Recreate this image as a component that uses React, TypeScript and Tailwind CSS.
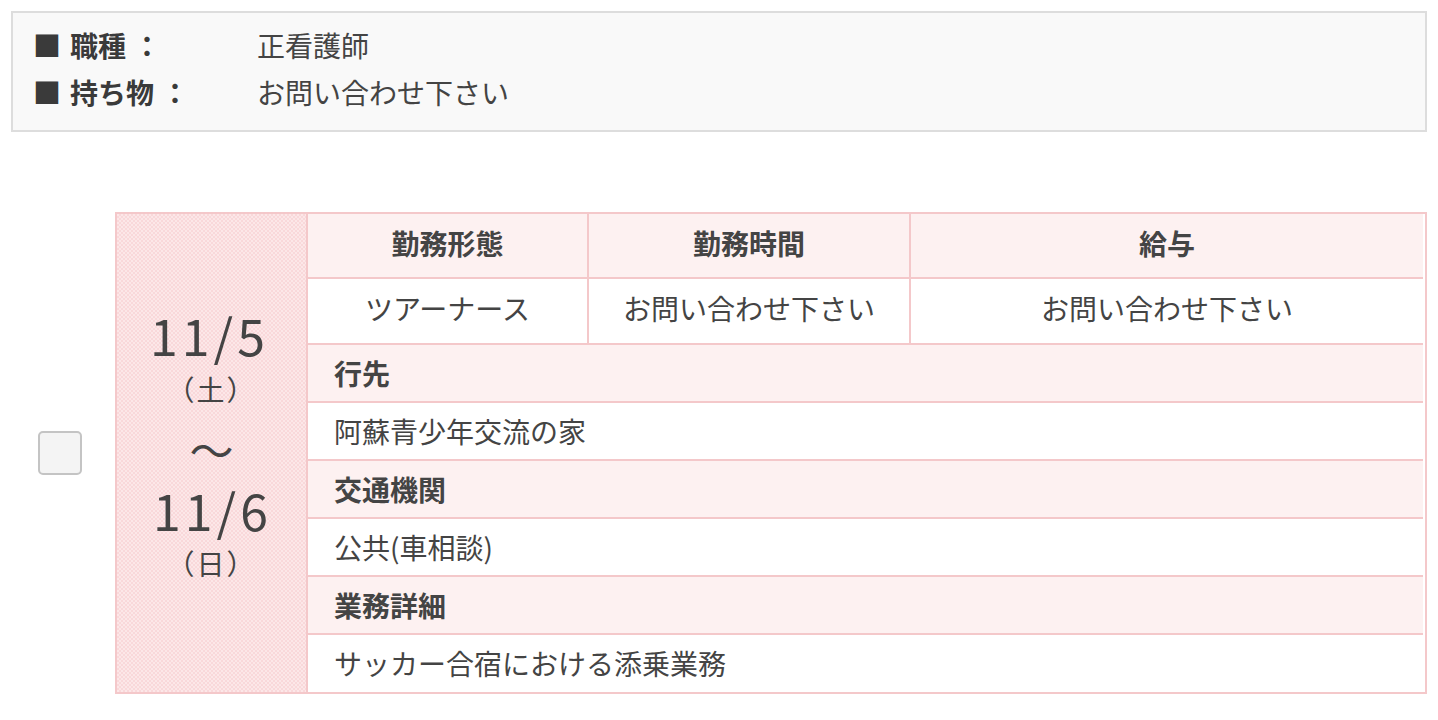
import React from 'react'

const rows = [
  { label: '行先', value: '阿蘇青少年交流の家' },
  { label: '交通機関', value: '公共(車相談)' },
  { label: '業務詳細', value: 'サッカー合宿における添乗業務' },
]

const info = [
  { label: '職種', value: '正看護師' },
  { label: '持ち物', value: 'お問い合わせ下さい' },
]

export default function App() {
  return (
    <div className="min-h-screen bg-white px-[11px] pt-[11px] text-[#444] font-['Noto_Sans_CJK_JP','Noto_Sans',sans-serif]">
      {/* 概要 */}
      <div className="border-2 border-[#dddddd] bg-[#f9f9f9] pl-[20px] pt-[9px] pb-[14px]">
        {info.map((item) => (
          <div key={item.label} className="flex text-[28px] leading-[47px]">
            <div className="w-[224px] shrink-0 font-bold text-[#3a3a3a]">
              <span>■</span>
              <span className="ml-[9px]">{item.label}</span>
              <span className="ml-[7px]">：</span>
            </div>
            <div>{item.value}</div>
          </div>
        ))}
      </div>

      {/* 日程 */}
      <div className="mt-[80px] flex">
        <div className="w-[104px] shrink-0 flex items-center pl-[27px]">
          <div className="w-[44px] h-[44px] rounded-[5px] border-2 border-[#c4c4c4] bg-[#f4f4f4]"></div>
        </div>

        <div className="flex-1 flex border-2 border-[#f4c8ca]">
          <div className="w-[191px] shrink-0 border-r-2 border-[#f4c8ca] bg-[repeating-conic-gradient(#f9d8da_0_25%,#fce7e8_0_50%)] bg-[length:4px_4px] flex flex-col items-center justify-center pb-[21px]">
            <div className="text-[50px] leading-[60px] tracking-[4px] pr-[4px]">11/5</div>
            <div className="mt-[7px] text-[28px] leading-[36px] tracking-[2px]">（土）</div>
            <div className="pt-[12px] text-[44px] leading-[60px]">～</div>
            <div className="text-[50px] leading-[60px] tracking-[4px] pl-[2px]">11/6</div>
            <div className="mt-[6px] text-[28px] leading-[36px] tracking-[2px]">（日）</div>
          </div>

          <div className="flex-1 pr-[2px]">
            <div className="grid grid-cols-[281px_322px_1fr] text-[28px] text-center">
              <div className="h-[65px] pb-[5px] flex items-center justify-center bg-[#fdf1f1] border-r-2 border-b-2 border-[#f4c8ca] font-bold">勤務形態</div>
              <div className="h-[65px] pb-[5px] flex items-center justify-center bg-[#fdf1f1] border-r-2 border-b-2 border-[#f4c8ca] font-bold">勤務時間</div>
              <div className="h-[65px] pb-[5px] flex items-center justify-center bg-[#fdf1f1] border-b-2 border-[#f4c8ca] font-bold">給与</div>
              <div className="h-[66px] pb-[6px] flex items-center justify-center border-r-2 border-b-2 border-[#f4c8ca]">ツアーナース</div>
              <div className="h-[66px] pb-[6px] flex items-center justify-center border-r-2 border-b-2 border-[#f4c8ca]">お問い合わせ下さい</div>
              <div className="h-[66px] pb-[6px] flex items-center justify-center border-b-2 border-[#f4c8ca]">お問い合わせ下さい</div>
            </div>
            {rows.map((row, i) => (
              <div key={row.label} className="text-[28px]">
                <div className="h-[58px] pb-[1px] flex items-center pl-[26px] bg-[#fdf1f1] border-b-2 border-[#f4c8ca] font-bold">{row.label}</div>
                <div className={`pb-[1px] flex items-center pl-[26px] ${i < rows.length - 1 ? 'h-[58px] border-b-2 border-[#f4c8ca]' : 'h-[57px]'}`}>{row.value}</div>
              </div>
            ))}
          </div>
        </div>
      </div>
    </div>
  )
}
